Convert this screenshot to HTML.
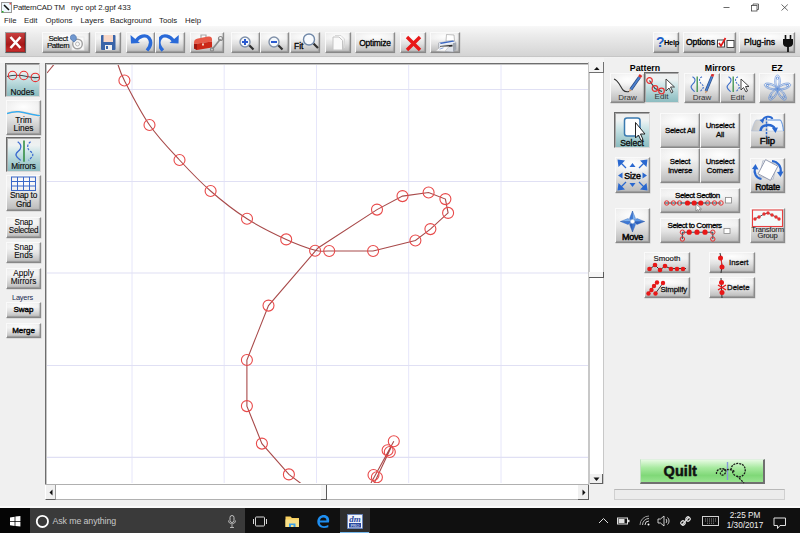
<!DOCTYPE html>
<html><head><meta charset="utf-8">
<style>
*{margin:0;padding:0;box-sizing:border-box}
html,body{width:800px;height:533px;overflow:hidden;background:#f0f0f0;font-family:"Liberation Sans",sans-serif;position:relative}
.a{position:absolute}
#title{left:0;top:0;width:800px;height:14px;background:#fff}
#menu{left:0;top:14px;width:800px;height:12px;background:#fff}
.t{position:absolute;white-space:nowrap;color:#000}
#tb{left:0;top:26px;width:800px;height:31px;background:linear-gradient(#f8f8f8,#ececec 30%,#d4d4d4);border-bottom:1px solid #c6c6c6}
#band{left:0;top:57px;width:800px;height:6px;background:linear-gradient(#f2f2f2,#f6f6f6)}
.btn{position:absolute;background:radial-gradient(ellipse 60% 30% at 50% 18%,rgba(255,255,255,0.95),rgba(255,255,255,0)),linear-gradient(#ececec,#f0f0f0 30%,#e2e2e2 55%,#bababa);border-right:1px solid #8c8c8c;border-bottom:1px solid #888;border-left:1px solid #fafafa;border-top:1px solid #fafafa;box-shadow:inset -1px -1px 1px rgba(0,0,0,0.18),0.5px 0.5px 0 #c8c8c8}
.sel{background:linear-gradient(#eeeeee,#eef2f2 22%,#cfe6e8 42%,#a6cdd0 75%,#8cbcc0);border-top:1px solid #6a6a6a;border-left:1px solid #6a6a6a;border-right:1px solid #d8d8d8;border-bottom:1px solid #d8d8d8;box-shadow:inset 1px 1px 0 #a8a8a8}
.lbl{position:absolute;left:0;right:0;text-align:center;color:#111;white-space:nowrap}
#canvas{left:45px;top:63px;width:544px;height:421px;background:#fff;border-left:1px solid #6e6e6e;border-top:1px solid #6e6e6e;box-shadow:inset 1px 1px 0 #c4c4c4;overflow:hidden}
#vs{left:588px;top:62px;width:17px;height:422px;background:#fff;border-left:2.5px solid #c8c8c8;border-right:2.5px solid #c8c8c8}
#hs{left:45px;top:484px;width:544px;height:16px;background:#fff;border-top:1.5px solid #b0b0b0;border-bottom:1.5px solid #b0b0b0}
#rp{left:604px;top:58px;width:196px;height:449px;background:#f0f0f0}
#task{left:0;top:507.5px;width:800px;height:26px;background:#101010}
</style></head><body>
<div id="title" class="a">
  <svg class="a" style="left:1px;top:2px" width="11" height="11"><rect x="0.5" y="0.5" width="10" height="10" fill="#eef8fc" stroke="#999"/><path d="M3,3 L8,8" stroke="#111" stroke-width="1.6"/><rect x="1" y="9" width="1.5" height="1.5" fill="#2a2"/><rect x="8.5" y="1" width="1.5" height="1.5" fill="#e44"/></svg>
  <div class="t" style="left:13px;top:3px;font-size:7.8px;color:#222;letter-spacing:-0.25px">PatternCAD TM</div>
  <div class="t" style="left:71px;top:3px;font-size:7.8px;color:#222">nyc opt 2.gpf 433</div>
  <svg class="a" style="left:720px;top:2px" width="75" height="11"><path d="M3.5,5.5 H9.5" stroke="#444" stroke-width="0.8"/><rect x="31.5" y="3.5" width="5.5" height="5.5" fill="none" stroke="#444" stroke-width="0.8"/><path d="M33,3.5 V2 H38.5 V7.5 H37" fill="none" stroke="#444" stroke-width="0.8"/><path d="M61.5,2.5 L67.8,8.5 M67.8,2.5 L61.5,8.5" stroke="#444" stroke-width="0.8"/></svg>
</div>
<div id="menu" class="a">
  <div class="t" style="left:4px;top:2px;font-size:7.8px;color:#222">File</div>
  <div class="t" style="left:24px;top:2px;font-size:7.8px;color:#222">Edit</div>
  <div class="t" style="left:45.5px;top:2px;font-size:7.8px;color:#222">Options</div>
  <div class="t" style="left:80.5px;top:2px;font-size:7.8px;color:#222">Layers</div>
  <div class="t" style="left:110px;top:2px;font-size:7.8px;color:#222">Background</div>
  <div class="t" style="left:159px;top:2px;font-size:7.8px;color:#222">Tools</div>
  <div class="t" style="left:185px;top:2px;font-size:7.8px;color:#222">Help</div>
</div>
<div id="tb" class="a"></div><div id="band" class="a"></div>
<div class="btn" style="left:5px;top:32px;width:21px;height:21px;background:linear-gradient(#c84040,#a81818 60%,#d03030);border-color:#a0a0a0 #606060 #606060 #a0a0a0"><svg width="19" height="19" class="a" style="left:0;top:0"><path d="M4.5,4 L14.5,15 M14.5,4 L4.5,15" stroke="#fff" stroke-width="2.6"/></svg></div>
<div class="btn" style="left:42px;top:32px;width:48px;height:21px"><div class="t" style="left:4px;top:1.5px;font-size:8px;line-height:7.8px;text-align:center;letter-spacing:-0.5px;-webkit-text-stroke:0.1px #000">Select<br>Pattern</div>
<svg class="a" style="left:27px;top:1px" width="20" height="18"><rect x="2" y="3" width="12" height="13" fill="#fafafa" stroke="#e4e4e4" stroke-width="0.8"/><circle cx="7.5" cy="10" r="4.8" fill="none" stroke="#a0a0a0" stroke-width="1.4"/><circle cx="7.5" cy="10" r="2" fill="none" stroke="#b8b8b8" stroke-width="1"/><path d="M1,1.5 C3,0 5,0.5 6,2.5 C7,4.5 6,7 4,8 L1.5,6 C0,4.5 0,3 1,1.5Z" fill="#7098d0" stroke="#4a70a8" stroke-width="0.7"/></svg></div>
<div class="btn" style="left:95px;top:32px;width:26px;height:21px"><svg class="a" style="left:4px;top:1px" width="17" height="17"><rect x="1" y="1" width="14.5" height="15" rx="1" fill="#3a64a8"/><rect x="3.5" y="1" width="9.5" height="7" fill="#f8d8c8"/><rect x="5" y="11" width="7" height="5" fill="#f0f0f0"/><rect x="6" y="12" width="2" height="3" fill="#3a64a8"/></svg></div>
<div class="btn" style="left:126px;top:32px;width:29px;height:21px"><svg class="a" style="left:3px;top:0" width="24" height="20"><path d="M6,8 C9,3 16,1 19,5 C22,9 20,14 17,17.5" fill="none" stroke="#2a6ad8" stroke-width="3.4"/><path d="M0.5,2 L1,10.5 L10,10Z" fill="#2a6ad8"/></svg></div>
<div class="btn" style="left:155px;top:32px;width:30px;height:21px"><svg class="a" style="left:3px;top:0" width="24" height="20"><path d="M14.5,8 C11.5,3 4.5,1 1.5,5 C-1.5,9 0.5,14 3.9,17.5" fill="none" stroke="#2a6ad8" stroke-width="3.4"/><path d="M19.8,2 L19.5,10.5 L10.5,10Z" fill="#2a6ad8"/></svg></div>
<div class="btn" style="left:190px;top:32px;width:34px;height:21px"><svg class="a" style="left:0;top:0" width="33" height="20"><path d="M10,5 V2 H15 V4" fill="none" stroke="#a8a8a8" stroke-width="1.2"/><path d="M3,10 C3,7 4.5,6 7,5.5 L17,3.5 C19.5,3 21,4 21,6.5 V8.5 L3,11 Z" fill="#e85a48"/><path d="M3,11 L21,8.5 V14.5 L6,17 L3,15.5Z" fill="#cc2818"/><path d="M3,11 V15.5 L6,17 V11Z" fill="#a01810"/><rect x="11" y="10.5" width="2" height="2" fill="#f0d0c0"/><path d="M21.5,16 L29.5,6" stroke="#888" stroke-width="1.6"/><circle cx="29.5" cy="5.5" r="2" fill="none" stroke="#888" stroke-width="1.2"/><circle cx="21" cy="16.5" r="1.6" fill="none" stroke="#888" stroke-width="1.2"/></svg></div>
<div class="btn" style="left:231px;top:32px;width:29px;height:21px"><svg class="a" style="left:6px;top:1px" width="20" height="19"><path d="M11,11 L15.5,15.5" stroke="#303030" stroke-width="2.2"/><circle cx="7" cy="8" r="5" fill="#f4f8fc" stroke="#8090a8" stroke-width="1.4"/><path d="M4,8 H10 M7,5 V11" stroke="#2a5ad0" stroke-width="2"/></svg></div>
<div class="btn" style="left:260px;top:32px;width:29px;height:21px"><svg class="a" style="left:6px;top:1px" width="20" height="19"><path d="M11,11 L15.5,15.5" stroke="#303030" stroke-width="2.2"/><circle cx="7" cy="8" r="5" fill="#f4f8fc" stroke="#8090a8" stroke-width="1.4"/><path d="M4,8 H10" stroke="#2a5ad0" stroke-width="2"/></svg></div>
<div class="btn" style="left:290px;top:32px;width:30px;height:21px"><div class="t" style="left:3px;top:8px;font-size:8.5px;-webkit-text-stroke:0.3px #000">Fit</div><svg class="a" style="left:11px;top:0" width="18" height="19"><path d="M11.5,10.5 L16,15" stroke="#303030" stroke-width="2.2"/><circle cx="7" cy="6.5" r="5.5" fill="#f8fbff" stroke="#7088a8" stroke-width="1.4"/></svg></div>
<div class="btn" style="left:325px;top:32px;width:26px;height:21px"><svg class="a" style="left:6px;top:2px" width="14" height="16"><path d="M3,0.5 H9 L12.5,4 V13" fill="none" stroke="#d8d8d8"/><path d="M1,2 H7 L10.5,5.5 V15 H1 Z" fill="#fafafa" stroke="#c4c4c4"/></svg></div>
<div class="btn" style="left:355px;top:32px;width:40px;height:21px"><div class="t" style="left:0;right:0;top:5px;text-align:center;font-size:8.4px;letter-spacing:-0.2px;-webkit-text-stroke:0.3px #000">Optimize</div></div>
<div class="btn" style="left:400px;top:32px;width:26px;height:21px"><svg class="a" style="left:4px;top:2px" width="18" height="17"><path d="M2,2 L15,15 M15,2 L2,15" stroke="#e81818" stroke-width="3.4"/></svg></div>
<div class="btn" style="left:430px;top:32px;width:30px;height:21px"><svg class="a" style="left:3px;top:1px" width="24" height="20"><path d="M12,7 L12.5,0.5 L20,1 L20.5,7Z" fill="#fff" stroke="#999" stroke-width="0.6"/><path d="M4.5,9 L19,6.5 L22,8.5 L22,15.5 L19,18 L4.5,17Z" fill="#dfe3ea" stroke="#8a8f98" stroke-width="0.5"/><path d="M4.5,9 L19,6.5 L22,8.5 L7.5,11Z" fill="#f0f4fa"/><path d="M5.5,8.8 L19,6.6 L20.5,7.6 L7,10Z" fill="#3a66c0"/><path d="M19,9 L22,8.5 V15.5 L19,18Z" fill="#a0a6b0"/><path d="M6,12 L18.5,10.8 V12.5 L6,13.8Z" fill="#2a2a2a"/><path d="M1.5,17 L6.5,12.8 L15,12.5 L11,17.2Z" fill="#fafafa" stroke="#aaa" stroke-width="0.5"/><path d="M5.5,15.2 L9.5,13.8" stroke="#7090d0" stroke-width="0.8"/></svg></div>
<div class="btn" style="left:653px;top:32px;width:26px;height:21px"><div class="t" style="left:2px;top:0.5px;font-size:14px;font-weight:bold;color:#2060c8">?</div><div class="t" style="left:10px;top:5px;font-size:7.5px;font-weight:bold;letter-spacing:-0.3px">Help</div></div>
<div class="btn" style="left:683px;top:32px;width:53px;height:21px"><div class="t" style="left:2px;top:4px;font-size:8.6px;letter-spacing:-0.1px;-webkit-text-stroke:0.35px #000">Options</div><svg class="a" style="left:32px;top:3px" width="20" height="13"><rect x="1.5" y="4" width="7" height="7" fill="#fff" stroke="#333" stroke-width="0.9"/><path d="M3,7 L5,10 L9.5,2" fill="none" stroke="#e01818" stroke-width="1.7"/><rect x="11" y="4.5" width="7" height="7" fill="#fff" stroke="#333" stroke-width="0.9"/></svg></div>
<div class="btn" style="left:739px;top:32px;width:56px;height:21px"><div class="t" style="left:4px;top:4px;font-size:8.6px;letter-spacing:0px;-webkit-text-stroke:0.35px #000">Plug-ins</div><svg class="a" style="left:42px;top:2px" width="12" height="17"><path d="M3.5,0 V4 M8.5,0 V4" stroke="#111" stroke-width="1.6"/><path d="M1,4 H11 V8 C11,11 9,12 6,12 C3,12 1,11 1,8 Z" fill="#111"/><path d="M6,12 V17" stroke="#111" stroke-width="1.8"/></svg></div>
<!-- left panel -->
<div class="btn sel" style="left:5px;top:63px;width:35px;height:34px"><svg class="a" style="left:0.5px;top:4px" width="33" height="18"><path d="M0,8.5 C8,6.5 14,7 20,8.5 C26,10 29,10 33,9" fill="none" stroke="#3a4a50" stroke-width="1.1"/><circle cx="5.5" cy="7.5" r="4.2" fill="none" stroke="#e83030" stroke-width="1.1"/><circle cx="16.8" cy="7.5" r="4.2" fill="none" stroke="#e83030" stroke-width="1.1"/><circle cx="28.3" cy="9.4" r="4.2" fill="none" stroke="#e83030" stroke-width="1.1"/></svg><div class="lbl" style="top:22.5px;font-size:8.3px;-webkit-text-stroke:0.15px #000">Nodes</div></div>
<div class="btn" style="left:6px;top:100px;width:35px;height:35px"><svg class="a" style="left:0;top:6px" width="34" height="12"><path d="M0,6.5 C4,5 8,4.5 12,4.8 C20,5.5 26,8.5 33,8.5" fill="none" stroke="#fde8d8" stroke-width="3.2"/><path d="M0,6.5 C4,5 8,4.5 12,4.8 C20,5.5 26,8.5 33,8.5" fill="none" stroke="#38acf0" stroke-width="1.6"/></svg><div class="lbl" style="top:16px;font-size:8.3px;line-height:7.8px;-webkit-text-stroke:0.15px #000">Trim<br>Lines</div></div>
<div class="btn sel" style="left:6px;top:137px;width:35px;height:35px"><svg class="a" style="left:1.5px;top:1px" width="33" height="24"><path d="M15,1.5 V22.8" stroke="#2a8a3a" stroke-width="1.5"/><path d="M8.7,2.8 C12,5 12.5,8 11,10.5 C9.5,12.5 6,14 7.1,16.5 C7.8,18.5 10,20 11.6,21.4" fill="none" stroke="#3a6ad0" stroke-width="1.3"/><path d="M21.6,2.8 C18.5,5 18,8 19.5,10.5 C21,12.5 24.5,14 23.7,16.5 C23,18.5 21,20 19.5,21.4" fill="none" stroke="#3a6ad0" stroke-width="1.2" stroke-dasharray="2.4 1.3"/></svg><div class="lbl" style="top:22.5px;font-size:8.3px;-webkit-text-stroke:0.15px #000;letter-spacing:-0.2px">Mirrors</div></div>
<div class="btn" style="left:6px;top:175px;width:35px;height:36px"><svg class="a" style="left:0;top:0" width="34" height="16"><g stroke="#3a68c8" stroke-width="1" fill="none"><rect x="4.5" y="1" width="24" height="13.5"/><path d="M10.5,1 V14.5 M16.5,1 V14.5 M22.5,1 V14.5 M4.5,5.5 H28.5 M4.5,10 H28.5"/></g></svg><div class="lbl" style="top:15px;font-size:8.3px;line-height:8.6px;-webkit-text-stroke:0.15px #000;letter-spacing:-0.2px">Snap to<br>Grid</div></div>
<div class="btn" style="left:6px;top:217px;width:35px;height:21px"><div class="lbl" style="top:0.5px;font-size:8.2px;line-height:8.5px;letter-spacing:-0.3px;-webkit-text-stroke:0.1px #000">Snap<br>Selected</div></div>
<div class="btn" style="left:6px;top:242px;width:35px;height:21px"><div class="lbl" style="top:0.5px;font-size:8.2px;line-height:8.5px;-webkit-text-stroke:0.1px #000">Snap<br>Ends</div></div>
<div class="btn" style="left:6px;top:268px;width:35px;height:21px"><div class="lbl" style="top:0.5px;font-size:8.2px;line-height:8.5px;-webkit-text-stroke:0.1px #000">Apply<br>Mirrors</div></div>
<div class="t" style="left:0;width:45px;text-align:center;top:293px;font-size:7.4px;color:#1a2a50;letter-spacing:-0.2px">Layers</div>
<div class="btn" style="left:6px;top:302px;width:35px;height:16px"><div class="lbl" style="top:2px;font-size:8px;-webkit-text-stroke:0.4px #000">Swap</div></div>
<div class="btn" style="left:6px;top:323px;width:35px;height:15px"><div class="lbl" style="top:1.5px;font-size:8px;-webkit-text-stroke:0.4px #000">Merge</div></div>
<div id="canvas" class="a"></div>
<svg class="a" style="left:47px;top:65px" width="541" height="418" viewBox="47 65 541 418">
<g stroke="#e6e6fa" stroke-width="1">
<line x1="132" y1="64" x2="132" y2="483"/><line x1="224.2" y1="64" x2="224.2" y2="483"/><line x1="316.5" y1="64" x2="316.5" y2="483"/><line x1="408.7" y1="64" x2="408.7" y2="483"/><line x1="501" y1="64" x2="501" y2="483"/>
</g>
<g stroke="#e0e0f4" stroke-width="1.2">
<line x1="47" y1="89.5" x2="588" y2="89.5"/><line x1="47" y1="181.5" x2="588" y2="181.5"/><line x1="47" y1="273" x2="588" y2="273"/><line x1="47" y1="365.5" x2="588" y2="365.5"/><line x1="47" y1="457.3" x2="588" y2="457.3"/>
</g>
<g fill="none" stroke="#a84a4a" stroke-width="1.1">
<path d="M47,73 L56,62"/>
<path d="M112,52 L117.0,62.0 C119.1,66.8 119.0,70.0 124.4,80.5 C129.8,91.0 140.3,111.8 149.5,125.0 C158.7,138.2 169.3,149.0 179.5,160.0 C189.7,171.0 199.3,181.2 210.6,191.0 C221.8,200.8 234.4,210.7 247.0,218.8 C259.6,226.9 274.8,234.2 286.2,239.4 C297.6,244.6 308.1,248.3 315.2,250.2 C322.3,252.1 319.4,250.9 329.0,251.0 L373.1,251.0 L415.4,240.5 L430.4,229.1 L448.1,212.9 L445.4,199.1 L428.6,192.5 L402.5,196.1 L377,209.6 L318,248 L268.5,305.6 L246.9,360.0 L246.9,406.1 L261.9,443.6 L288.9,474.4 L303,485"/>
<path d="M393.8,441.3 L371,483 M391.5,446.5 L373.8,484"/>
</g>
<g fill="none" stroke="#e84a4a" stroke-width="1.1">
<circle cx="124.4" cy="80.5" r="5.5"/><circle cx="149.5" cy="125.0" r="5.5"/><circle cx="179.5" cy="160.0" r="5.5"/><circle cx="210.6" cy="191.0" r="5.5"/><circle cx="247.0" cy="218.8" r="5.5"/><circle cx="286.2" cy="239.4" r="5.5"/><circle cx="315.1" cy="250.8" r="5.5"/><circle cx="329.2" cy="251.0" r="5.5"/><circle cx="373.1" cy="251.0" r="5.5"/><circle cx="415.4" cy="240.5" r="5.5"/><circle cx="430.4" cy="229.1" r="5.5"/><circle cx="448.1" cy="212.9" r="5.5"/><circle cx="445.4" cy="199.1" r="5.5"/><circle cx="428.6" cy="192.5" r="5.5"/><circle cx="402.5" cy="196.1" r="5.5"/><circle cx="377.0" cy="209.6" r="5.5"/><circle cx="268.5" cy="305.6" r="5.5"/><circle cx="246.9" cy="360.0" r="5.5"/><circle cx="246.9" cy="406.1" r="5.5"/><circle cx="261.9" cy="443.6" r="5.5"/><circle cx="288.9" cy="474.4" r="5.5"/>
<circle cx="393.8" cy="441.3" r="5.5"/><circle cx="387.6" cy="450.3" r="5.5"/><circle cx="389.8" cy="452" r="5.5"/><circle cx="373.5" cy="475" r="5.5"/><circle cx="376.9" cy="477.3" r="5.5"/>
</g>
</svg>
<div id="vs" class="a"></div>
<div class="a" style="left:589px;top:62px;width:15px;height:11px;background:#f4f4f4;border-right:1.5px solid #707070;border-bottom:1.5px solid #707070"></div>
<svg class="a" style="left:592px;top:65px" width="10" height="6"><path d="M2,5 L4.8,2 L7.6,5Z" fill="#111"/></svg>
<div class="a" style="left:589px;top:272px;width:15px;height:6px;background:#f6f6f6;border-bottom:1.5px solid #5a5a5a;border-right:1.5px solid #5a5a5a"></div>
<div class="a" style="left:590px;top:474px;width:13px;height:10px;background:#f0f0f0;border-right:1px solid #606060;border-bottom:1px solid #606060"></div>
<svg class="a" style="left:592px;top:476px" width="9" height="6"><path d="M1.5,1.5 L4.5,5 L7.5,1.5Z" fill="#111"/></svg>
<div id="hs" class="a"></div>
<div class="a" style="left:46px;top:485px;width:10px;height:15px;background:#f0f0f0;border-right:1px solid #a0a0a0;border-bottom:1px solid #606060"></div>
<svg class="a" style="left:48px;top:488px" width="6" height="9"><path d="M4.5,1.5 L1.5,4.5 L4.5,7.5Z" fill="#111"/></svg>
<div class="a" style="left:321px;top:485px;width:6px;height:15px;background:#f6f6f6;border-right:1.5px solid #5a5a5a;border-bottom:1.5px solid #5a5a5a"></div>
<div class="a" style="left:578px;top:485px;width:11px;height:15px;background:#f0f0f0;border-right:1px solid #606060;border-bottom:1px solid #606060"></div>
<svg class="a" style="left:581px;top:488px" width="6" height="9"><path d="M1.5,1.5 L4.5,4.5 L1.5,7.5Z" fill="#111"/></svg>

<div id="rp" class="a"></div>
<!-- right panel -->
<div class="t" style="left:615px;width:60px;text-align:center;top:63px;font-size:8.8px;font-weight:bold">Pattern</div>
<div class="t" style="left:690px;width:60px;text-align:center;top:63px;font-size:8.8px;font-weight:bold">Mirrors</div>
<div class="t" style="left:757px;width:40px;text-align:center;top:63px;font-size:8.8px;font-weight:bold">EZ</div>
<div class="btn" style="left:610px;top:73px;width:35px;height:30px"><svg class="a" style="left:1px;top:0" width="33" height="21"><path d="M2,5 C6,6 8,12 11,16 C13,18 15,18 17,17.5" fill="none" stroke="#303030" stroke-width="1.1"/><path d="M27.5,3.2 L18.8,15.5" stroke="#2a4a80" stroke-width="3.2"/><path d="M27.5,3.2 L18.8,15.5" stroke="#4a80d0" stroke-width="1.8"/><path d="M27.5,3.2 L29,1" stroke="#d83030" stroke-width="3.2"/><path d="M17.5,15 L17,18 L19.8,16.3Z" fill="#c89060"/></svg><div class="lbl" style="top:19px;font-size:8px;color:#333">Draw</div></div>
<div class="btn sel" style="left:644px;top:72px;width:35px;height:31px"><svg class="a" style="left:0;top:1px" width="33" height="22"><path d="M4.5,6.5 L10,14.5 L17,17.5" fill="none" stroke="#304048" stroke-width="1.1"/><circle cx="4.5" cy="6.5" r="2.8" fill="none" stroke="#e83030" stroke-width="1.2"/><circle cx="10" cy="14.5" r="2.8" fill="none" stroke="#e83030" stroke-width="1.2"/><circle cx="16.5" cy="17" r="2.8" fill="none" stroke="#e83030" stroke-width="1.2"/><path d="M21,5 V17 L24,14 L26.5,19 L28,18 L25.5,13 L29.5,13 Z" fill="#fff" stroke="#333" stroke-width="0.9"/></svg><div class="lbl" style="top:19px;font-size:8px;color:#333">Edit</div></div>
<div class="btn" style="left:684px;top:73px;width:36px;height:30px"><svg class="a" style="left:0;top:0" width="34" height="21"><path d="M12.2,2.5 V18" stroke="#3a9048" stroke-width="1.3"/><path d="M7.5,2.7 C10,4 10.5,6 9.5,8 C8.5,10 5.5,11 6.2,13.5 C6.8,15.5 8.5,16.5 9.7,17.7" fill="none" stroke="#4070c8" stroke-width="1.1"/><path d="M17,2.7 C14.5,4 14,6 15,8 C16,10 19,11 18.3,13.5 C17.7,15.5 16,16.5 14.8,17.7" fill="none" stroke="#4070c8" stroke-width="1.05" stroke-dasharray="2 1.1"/><path d="M27,2.5 L21,17" stroke="#2a4a80" stroke-width="2.8"/><path d="M27,2.5 L21,17" stroke="#4a80d0" stroke-width="1.6"/><path d="M27,2.5 L28,0" stroke="#d83030" stroke-width="2.8"/><path d="M20.5,16.5 L20.2,19.5 L22.5,17.5Z" fill="#c89060"/></svg><div class="lbl" style="top:19px;font-size:8px;color:#333">Draw</div></div>
<div class="btn" style="left:720px;top:73px;width:35px;height:30px"><svg class="a" style="left:0;top:0" width="34" height="21"><path d="M12.2,2.5 V18" stroke="#3a9048" stroke-width="1.3"/><path d="M7.5,2.7 C10,4 10.5,6 9.5,8 C8.5,10 5.5,11 6.2,13.5 C6.8,15.5 8.5,16.5 9.7,17.7" fill="none" stroke="#4070c8" stroke-width="1.1"/><path d="M17,2.7 C14.5,4 14,6 15,8 C16,10 19,11 18.3,13.5 C17.7,15.5 16,16.5 14.8,17.7" fill="none" stroke="#4070c8" stroke-width="1.05" stroke-dasharray="2 1.1"/><path d="M20,5 V16 L22.5,13.5 L25,18 L26.5,17 L24.5,12.5 L28,12.5 Z" fill="#fff" stroke="#333" stroke-width="0.9"/></svg><div class="lbl" style="top:19px;font-size:8px;color:#333">Edit</div></div>
<div class="btn" style="left:759px;top:73px;width:36px;height:30px"><svg class="a" style="left:0;top:0" width="34" height="28" viewBox="-17.5 -14.7 34 28"><g fill="none" stroke="#5a8ad8" stroke-width="0.6"><g id="pt"><path d="M0,0 C-3.5,-3 -3.5,-9 -1.8,-12.5 C-0.8,-14.2 0.8,-14.2 1.8,-12.5 C3.5,-9 3.5,-3 0,0Z"/><path d="M0,-1.5 C-2,-4 -2,-9 -0.6,-12 M0,-1.5 C2,-4 2,-9 0.6,-12"/><circle cx="0" cy="-10.5" r="1.2"/></g><use href="#pt" transform="rotate(72)"/><use href="#pt" transform="rotate(144)"/><use href="#pt" transform="rotate(216)"/><use href="#pt" transform="rotate(288)"/></g><circle r="1.1" fill="#5a8ad8"/></svg></div>

<div class="btn sel" style="left:614px;top:112px;width:36px;height:36px"><svg class="a" style="left:6px;top:2px" width="30" height="26"><rect x="3.5" y="3" width="15.5" height="18" rx="2.5" fill="#fff" stroke="#3a7ab0" stroke-width="1.5"/><path d="M14.5,7.5 V23 L17.5,20 L20,25.5 L22,24.5 L19.5,19 L24,19 Z" fill="#fff" stroke="#222" stroke-width="1"/></svg><div class="lbl" style="top:25px;font-size:8.5px;color:#111;-webkit-text-stroke:0.3px #000">Select</div></div>
<div class="btn" style="left:660px;top:113px;width:40px;height:35px"><div class="lbl" style="top:11.5px;font-size:7.8px;letter-spacing:-0.2px;-webkit-text-stroke:0.3px #000">Select All</div></div>
<div class="btn" style="left:700px;top:113px;width:40px;height:35px"><div class="lbl" style="top:8px;font-size:7.8px;line-height:8.5px;letter-spacing:-0.2px;-webkit-text-stroke:0.3px #000">Unselect<br>All</div></div>
<div class="btn" style="left:660px;top:148px;width:40px;height:35px"><div class="lbl" style="top:9px;font-size:7.8px;line-height:8.5px;letter-spacing:-0.2px;-webkit-text-stroke:0.3px #000">Select<br>Inverse</div></div>
<div class="btn" style="left:700px;top:148px;width:40px;height:35px"><div class="lbl" style="top:9px;font-size:7.8px;line-height:8.5px;letter-spacing:-0.2px;-webkit-text-stroke:0.3px #000">Unselect<br>Corners</div></div>
<div class="btn" style="left:750px;top:113px;width:35px;height:35px"><svg class="a" style="left:0;top:0" width="33" height="24"><defs><linearGradient id="fg" x1="0" x2="1"><stop offset="0" stop-color="#c4c4c4"/><stop offset="0.5" stop-color="#e8e8e8"/><stop offset="0.55" stop-color="#fbfdff"/><stop offset="1" stop-color="#eef4fc"/></linearGradient></defs><path d="M0.5,17 C2,12 3,8 5,6 H29.5 C31,8 32,12 32.5,17 Z" fill="url(#fg)" stroke="#b0c0d8" stroke-width="0.6"/><path d="M17,6 H29.5 C31,8 32,12 32.5,17" fill="none" stroke="#4a88e0" stroke-width="0.8"/><path d="M11.5,7 C12.5,2 20,1.5 21.5,5" fill="none" stroke="#2a68d0" stroke-width="1.9"/><path d="M8.5,6 L13,4.5 L12,9.5Z" fill="#2a68d0"/><path d="M9.5,17 C10,10 21,9 24,15" fill="none" stroke="#2a68d0" stroke-width="2.4"/><path d="M21,14 L27,13.5 L24.5,19Z" fill="#2a68d0"/><path d="M15.5,4 V23" stroke="#2a68d0" stroke-width="1.5" stroke-dasharray="2.2 1.3"/></svg><div class="lbl" style="top:21px;font-size:9.5px;color:#111;-webkit-text-stroke:0.45px #000">Flip</div></div>
<div class="btn" style="left:615px;top:157px;width:35px;height:36px"><svg class="a" style="left:0;top:0" width="33" height="34"><g stroke="#2a68d0" stroke-width="1.3" fill="none"><path d="M3,3 L10,10 M30,3 L23,10 M3,31 L10,24 M30,31 L23,24"/></g><g fill="#2a68d0"><path d="M1.5,1.5 L9,2.5 L2.5,9Z M31.5,1.5 L24,2.5 L30.5,9Z M1.5,32.5 L9,31.5 L2.5,25Z M31.5,32.5 L24,31.5 L30.5,25Z"/><path d="M16.5,5 L13.5,9 H19.5Z M16.5,29 L13.5,25 H19.5Z M2,17.5 L6.5,14.5 V20.5Z M31,17.5 L26.5,14.5 V20.5Z"/></g></svg><div class="lbl" style="top:12.5px;font-size:8.8px;letter-spacing:-0.2px;-webkit-text-stroke:0.45px #000">Size</div></div>
<div class="btn" style="left:750px;top:158px;width:35px;height:35px"><svg class="a" style="left:0;top:0" width="33" height="23"><rect x="10" y="3" width="14" height="16" fill="#f4f6f8" stroke="#a8b0c0" stroke-width="0.7" transform="rotate(12 17 11)"/><rect x="10" y="3" width="14" height="16" fill="#fff" stroke="#8890a8" stroke-width="0.8" transform="rotate(28 17 11)"/><path d="M10.5,20 C5,19 2.5,14 4,9" fill="none" stroke="#2a68d0" stroke-width="2.2"/><path d="M1,10 L4.5,5 L7.5,10.5Z" fill="#2a68d0"/><path d="M21,2 C27,2.5 31,8 29.5,14" fill="none" stroke="#2a68d0" stroke-width="2.2"/><path d="M26,13 L29.5,18 L32.5,12.5Z" fill="#2a68d0"/></svg><div class="lbl" style="top:23px;font-size:8.8px;-webkit-text-stroke:0.45px #000;letter-spacing:-0.2px">Rotate</div></div>
<div class="btn" style="left:660px;top:188px;width:80px;height:25px"><div class="t" style="left:14px;top:1.5px;font-size:8px;letter-spacing:-0.45px;-webkit-text-stroke:0.3px #000">Select Section</div><svg class="a" style="left:-1px;top:-1px" width="80" height="24"><path d="M5,15 H19 M27,15 H40 M47,15 H61" stroke="#2a5a68" stroke-width="1.1"/><g fill="none" stroke="#e83030" stroke-width="1"><circle cx="6.7" cy="15" r="2.2"/><circle cx="13.4" cy="15" r="2.2"/><circle cx="19.6" cy="15" r="2.2"/><circle cx="47.7" cy="15" r="2.2"/><circle cx="54.5" cy="15" r="2.2"/><circle cx="61" cy="15" r="2.2"/></g><path d="M19.6,15 H47" stroke="#2a5a68" stroke-width="1.1"/><g fill="#e81818"><circle cx="27.5" cy="15" r="2.6"/><circle cx="34.2" cy="15" r="2.6"/><circle cx="40.8" cy="15" r="2.6"/></g><path d="M36,16 V23 L37.8,21.5 L39.5,24 L40.5,23.3 L39,21 H41.5Z" fill="#fff" stroke="#666" stroke-width="0.6"/><rect x="65.5" y="9.5" width="6" height="5.5" fill="#fff" stroke="#888" stroke-width="0.8"/></svg></div>
<div class="btn" style="left:615px;top:208px;width:35px;height:35px"><svg class="a" style="left:2px;top:1px" width="30" height="23"><g stroke="#3060b0" stroke-width="0.4"><path d="M14.5,1 L17.5,8.5 L14.5,11.5Z" fill="#7ab0f0"/><path d="M14.5,1 L11.5,8.5 L14.5,11.5Z" fill="#3a78d8"/><path d="M14.5,22 L17.5,14.5 L14.5,11.5Z" fill="#3a78d8"/><path d="M14.5,22 L11.5,14.5 L14.5,11.5Z" fill="#2a60c0"/><path d="M2.5,11.5 L10,8.5 L14.5,11.5Z" fill="#7ab0f0"/><path d="M2.5,11.5 L10,14.5 L14.5,11.5Z" fill="#3a78d8"/><path d="M26.5,11.5 L19,8.5 L14.5,11.5Z" fill="#5a98e8"/><path d="M26.5,11.5 L19,14.5 L14.5,11.5Z" fill="#2a60c0"/></g><circle cx="14.5" cy="11.5" r="2" fill="#fff" stroke="#c0d0e0" stroke-width="0.5"/></svg><div class="lbl" style="top:23px;font-size:9px;-webkit-text-stroke:0.5px #000;letter-spacing:-0.2px">Move</div></div>
<div class="btn" style="left:660px;top:218px;width:80px;height:25px"><div class="t" style="left:6.5px;top:1.5px;font-size:8px;letter-spacing:-0.45px;-webkit-text-stroke:0.3px #000">Select to Corners</div><svg class="a" style="left:-1px;top:-1px" width="80" height="25"><path d="M22.4,14.2 H52.8 M22.4,14.2 V21 M52.8,14.2 V21" stroke="#2a5a68" stroke-width="1.1"/><g fill="none" stroke="#e83030" stroke-width="1"><circle cx="22.4" cy="14.2" r="2.2"/><circle cx="22.4" cy="21" r="2.2"/><circle cx="52.8" cy="14.2" r="2.2"/><circle cx="52.8" cy="21" r="2.2"/></g><g fill="#e81818"><circle cx="29.2" cy="14.2" r="2.6"/><circle cx="37" cy="14.2" r="2.6"/><circle cx="45" cy="14.2" r="2.6"/></g><rect x="64" y="10.5" width="6" height="5" fill="#fff" stroke="#888" stroke-width="0.8"/></svg></div>
<div class="btn" style="left:750px;top:208px;width:35px;height:35px"><svg class="a" style="left:0;top:0" width="33" height="19"><rect x="1.5" y="1" width="30" height="16.5" fill="#f4fafa" stroke="#e84040" stroke-width="1.1"/><path d="M3,10 L8,8 L13,5 L17,4 L21,6 L25,8 L28,10" fill="none" stroke="#304048" stroke-width="0.9"/><g fill="#e83030"><circle cx="4" cy="10" r="1.7"/><circle cx="8" cy="8" r="1.7"/><circle cx="13" cy="5" r="1.7"/><circle cx="17" cy="4" r="1.7"/><circle cx="21" cy="6" r="1.7"/><circle cx="25" cy="8" r="1.7"/><circle cx="28" cy="10" r="1.7"/></g></svg><div class="lbl" style="top:17.5px;font-size:7.6px;line-height:6.8px;color:#222;letter-spacing:-0.2px;-webkit-text-stroke:0.1px #222">Transform<br>Group</div></div>
<div class="btn" style="left:644px;top:252px;width:46px;height:21px"><div class="lbl" style="top:1px;font-size:7.8px;color:#222;-webkit-text-stroke:0.2px #222">Smooth</div><svg class="a" style="left:1px;top:9px" width="44" height="11"><path d="M4,7 L9,3 L14,8 L19,4 L24,6.5 H40" fill="none" stroke="#303030" stroke-width="1"/><g fill="#e81818"><circle cx="3.5" cy="7" r="2.3"/><circle cx="9" cy="3" r="2.3"/><circle cx="14" cy="8" r="2.3"/><circle cx="19" cy="4" r="2.3"/><circle cx="25" cy="7" r="2.3"/><circle cx="31" cy="7" r="2.3"/><circle cx="37" cy="7" r="2.3"/></g></svg></div>
<div class="btn" style="left:709px;top:252px;width:46px;height:21px"><svg class="a" style="left:6px;top:0" width="12" height="20"><path d="M4,0 L5,5 L6,13 L5,20" fill="none" stroke="#303030" stroke-width="1"/><path d="M5,5 L6,13" stroke="#e83030" stroke-width="1"/><circle cx="4.5" cy="5" r="2.5" fill="#e81818"/><circle cx="6" cy="14" r="2.5" fill="#e81818"/></svg><div class="t" style="left:19px;top:5px;font-size:7.8px;color:#111;-webkit-text-stroke:0.3px #111">Insert</div></div>
<div class="btn" style="left:644px;top:277px;width:46px;height:21px"><svg class="a" style="left:1px;top:1px" width="20" height="18"><path d="M2,15 L11,3 M9,15 L17,4" stroke="#303030" stroke-width="0.9"/><g fill="#e81818"><circle cx="2.5" cy="14.5" r="2.2"/><circle cx="5.5" cy="11" r="2.2"/><circle cx="8" cy="7" r="2.2"/><circle cx="11" cy="3.5" r="2.2"/><circle cx="9.5" cy="14.5" r="2.2"/><circle cx="17" cy="4" r="2.2"/></g></svg><div class="t" style="left:15.5px;top:7px;font-size:7.8px;color:#111;-webkit-text-stroke:0.3px #111;letter-spacing:-0.1px">Simplify</div></div>
<div class="btn" style="left:709px;top:277px;width:46px;height:21px"><svg class="a" style="left:6px;top:0" width="14" height="20"><path d="M5,0 L6,20" stroke="#303030" stroke-width="1"/><circle cx="5.5" cy="4.5" r="2.5" fill="#e81818"/><circle cx="6" cy="14.5" r="2.5" fill="#e81818"/><path d="M2,7 L10,12 M10,7 L2,12" stroke="#e81818" stroke-width="1.4"/></svg><div class="t" style="left:17px;top:5px;font-size:7.8px;color:#111;-webkit-text-stroke:0.3px #111">Delete</div></div>
<div class="a" style="left:640px;top:459px;width:125px;height:25px;background:linear-gradient(#e6fae2,#a8eaa0 35%,#80d878 70%,#98e490);border-right:2px solid #707070;border-bottom:2px solid #707070;border-top:1px solid #e0f0e0;border-left:1px solid #c0e0c0"><div class="t" style="left:22.5px;top:3px;font-size:14.5px;font-weight:bold;color:#111;letter-spacing:0.1px;-webkit-text-stroke:0.5px #111">Quilt</div><svg class="a" style="left:74px;top:1px" width="34" height="23"><path d="M12.5,1 V19" stroke="#8898d8" stroke-width="1.4"/><path d="M1.5,13 C1,9 5,7 9,8 C12,9 11,13 8,14 C5,14.5 4,11 8,9.5 C12,8 17,8 20,11 M16,9 C16,4 20,2 24,2.5 C29,3 31,7 30,11 C29,15 25,17 21,15 C18,13.5 17,11 18,9 M22,15 L29,22" fill="none" stroke="#1a1a1a" stroke-width="1.3" stroke-dasharray="2 1"/></svg></div>
<div class="a" style="left:614px;top:489px;width:171px;height:11px;border:1px solid #d0d0d0;border-top-color:#b8b8b8;background:#ececec"></div>
<div class="a" style="left:0;top:505.5px;width:800px;height:2.5px;background:#fafafa"></div>
<div id="task" class="a">
<div class="a" style="left:0;top:0;width:30px;height:26px;background:#050505"></div>
<svg class="a" style="left:10px;top:8px" width="11" height="11"><path d="M0,1.4 L4.6,0.7 V4.9 H0Z M5.4,0.6 L10.4,0 V4.9 H5.4Z M0,5.7 H4.6 V9.9 L0,9.3Z M5.4,5.7 H10.4 V10.6 L5.4,10Z" fill="#fff"/></svg>
<div class="a" style="left:30px;top:0;width:215px;height:26px;background:#3a3a3a"></div>
<svg class="a" style="left:35px;top:6px" width="15" height="15"><circle cx="7.4" cy="7.4" r="5.6" fill="none" stroke="#fff" stroke-width="1.8"/></svg>
<div class="t" style="left:52.5px;top:8px;font-size:8.8px;color:#c8c8c8;letter-spacing:-0.1px">Ask me anything</div>
<svg class="a" style="left:227px;top:7px" width="10" height="13"><rect x="3" y="0.5" width="4" height="7" rx="2" fill="none" stroke="#c0c0c0" stroke-width="1"/><path d="M1.5,5.5 C1.5,10 8.5,10 8.5,5.5 M5,9.5 V12.5 M3,12.5 H7" fill="none" stroke="#c0c0c0" stroke-width="0.9"/></svg>
<svg class="a" style="left:252px;top:8px" width="16" height="11"><rect x="3.5" y="1" width="9" height="9" rx="0.8" fill="none" stroke="#d8d8d8" stroke-width="1"/><path d="M1.5,3 V8 M14.5,3 V8" stroke="#d8d8d8" stroke-width="1"/></svg>
<svg class="a" style="left:285px;top:7px" width="15" height="13"><path d="M0.5,1.5 H5.5 L7,3 H14 V12 H0.5Z" fill="#f8d060"/><path d="M0.5,4.5 H14 V12 H0.5Z" fill="#f8e088"/><path d="M4,8.5 H10.5 V12 H4Z" fill="#3aa0e8"/><path d="M6,10 H8.5 V12 H6Z" fill="#f8e088"/></svg>
<svg class="a" style="left:316px;top:7px" width="14" height="13"><path d="M12.8,7.6 H3.8 C4,10.2 6,11.2 8.2,11.2 C9.8,11.2 11.2,10.8 12.3,10.1 V12.2 C11,12.8 9.5,13 8,13 C4,13 1.3,10.5 1.3,6.6 C1.3,2.7 4.3,0 8,0 C11.2,0 13.2,2.3 13.2,5.5 C13.2,6.2 13.1,6.9 12.8,7.6Z M3.9,5.6 H10.5 C10.4,3.6 9.3,2.4 7.4,2.4 C5.6,2.4 4.3,3.6 3.9,5.6Z" fill="#1e8ef0"/></svg>
<div class="a" style="left:340px;top:0;width:30px;height:26px;background:#2e2e2e"></div>
<div class="a" style="left:340px;top:24px;width:29px;height:2px;background:#76b9ed"></div>
<svg class="a" style="left:347px;top:6px" width="16" height="15"><rect x="0.5" y="0.5" width="15" height="14" fill="#f0f4fa" stroke="#6080c0" stroke-width="0.8"/><text x="8" y="8" text-anchor="middle" font-family="Liberation Serif" font-style="italic" font-weight="bold" font-size="9" fill="#2848a0">dm</text><rect x="2" y="9" width="12" height="4.5" fill="#2848a0"/><text x="8" y="13" text-anchor="middle" font-family="Liberation Sans" font-size="4" fill="#fff">PRO</text></svg>
<svg class="a" style="left:598px;top:9px" width="11" height="7"><path d="M1,6 L5.5,1.5 L10,6" fill="none" stroke="#e0e0e0" stroke-width="1"/></svg>
<svg class="a" style="left:617px;top:9px" width="13" height="8"><rect x="0.5" y="1" width="10" height="6" fill="none" stroke="#e0e0e0" stroke-width="1"/><rect x="1.5" y="2" width="6" height="4" fill="#e0e0e0"/><rect x="11" y="2.8" width="1.5" height="2.4" fill="#e0e0e0"/></svg>
<svg class="a" style="left:639px;top:7px" width="11" height="11"><g fill="none" stroke="#a8a8a8" stroke-width="0.9"><path d="M1,10 A9,9 0 0 1 10,1"/><path d="M3.5,10 A6.5,6.5 0 0 1 10,3.5" stroke="#d0d0d0"/><path d="M6,10 A4,4 0 0 1 10,6" stroke="#e8e8e8"/></g><circle cx="9.5" cy="9.5" r="1" fill="#fff"/></svg>
<svg class="a" style="left:657px;top:7px" width="13" height="12"><path d="M1,4 H3.5 L7,1 V11 L3.5,8 H1Z" fill="none" stroke="#e0e0e0" stroke-width="0.9"/><path d="M9,4 C10,5 10,7 9,8 M10.5,2.5 C12.5,4.5 12.5,7.5 10.5,9.5" fill="none" stroke="#e0e0e0" stroke-width="0.9"/></svg>
<svg class="a" style="left:680px;top:7px" width="11" height="12"><path d="M2,10 L9,2" stroke="#e0e0e0" stroke-width="1.3"/><rect x="1" y="6" width="4" height="4" rx="1.5" fill="none" stroke="#e0e0e0" stroke-width="1.2" transform="rotate(-45 3 8)"/><rect x="6" y="2" width="4" height="4" rx="1.5" fill="none" stroke="#e0e0e0" stroke-width="1.2" transform="rotate(-45 8 4)"/></svg>
<svg class="a" style="left:702px;top:8px" width="17" height="10"><rect x="0.5" y="0.5" width="16" height="9" fill="none" stroke="#d0d0d0" stroke-width="1"/><path d="M3,3 H14 M3,5 H14 M5,7.2 H12" stroke="#b0b0b0" stroke-width="0.8" stroke-dasharray="1 1"/></svg>
<div class="t" style="left:720px;width:50px;text-align:center;top:3.5px;font-size:8.2px;color:#f0f0f0">2:25 PM</div>
<div class="t" style="left:720px;width:50px;text-align:center;top:13.5px;font-size:8.2px;color:#f0f0f0">1/30/2017</div>
<svg class="a" style="left:773px;top:9px" width="14" height="13"><path d="M1,1 H12.5 V8.5 H7 L4.5,11.5 V8.5 H1Z" fill="none" stroke="#e0e0e0" stroke-width="1"/></svg>
</div>

</body></html>
